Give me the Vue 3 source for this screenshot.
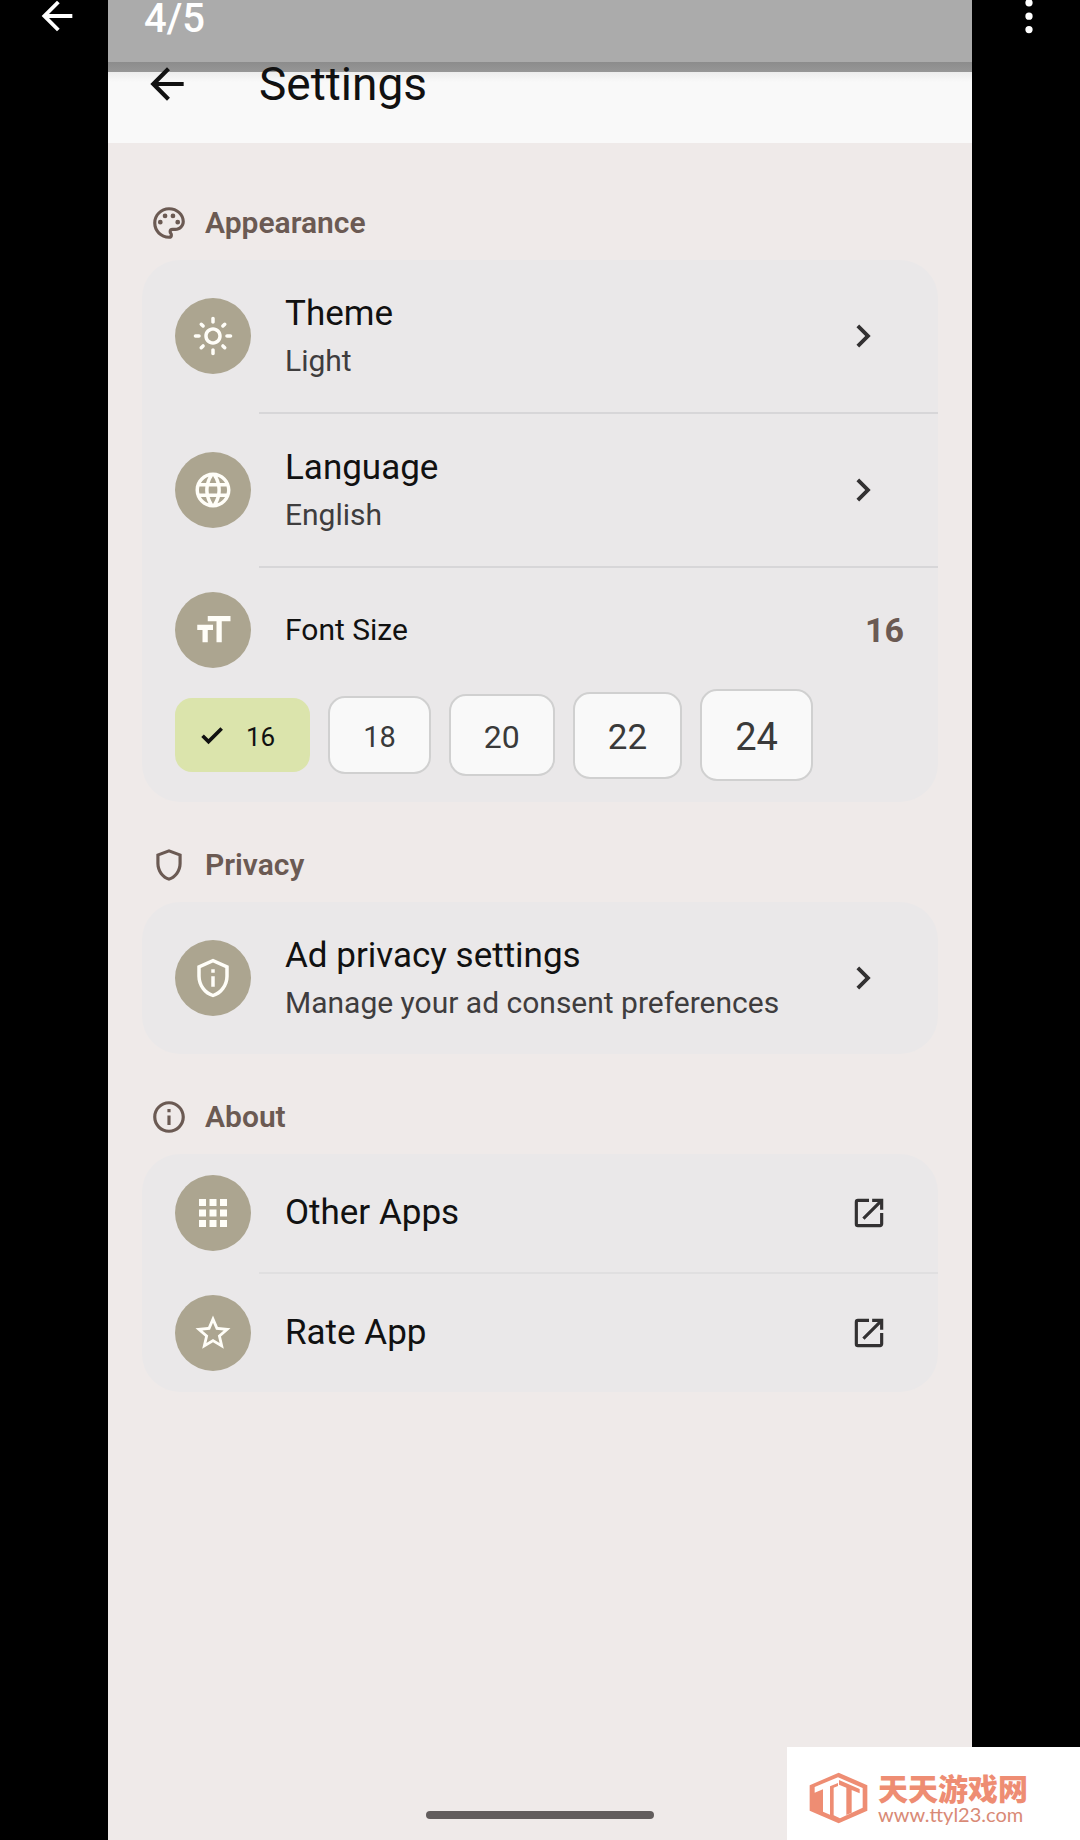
<template>
  <div class="viewer">
    <div class="gutter">
      <button class="icon-btn" aria-label="Back">
        <svg viewBox="0 0 24 24" class="i46"><path :d="icons.back" /></svg>
      </button>
    </div>

    <main class="phone">
      <div class="counter">4/5</div>
      <header class="appbar">
        <button class="icon-btn" aria-label="Navigate up">
          <svg viewBox="0 0 24 24" class="i50"><path :d="icons.back" /></svg>
        </button>
        <h1>Settings</h1>
      </header>

      <div class="content">
        <section>
          <h2><svg viewBox="0 0 24 24" class="i38"><path :d="icons.palette" /></svg>Appearance</h2>
          <div class="card">
            <template v-for="row in appearance" :key="row.title">
              <button class="row tall">
                <span class="badge"><svg viewBox="0 0 24 24" class="i42"><path :d="icons[row.icon]" /></svg></span>
                <span class="text">
                  <span class="title">{{ row.title }}</span>
                  <span class="sub">{{ row.sub }}</span>
                </span>
                <svg viewBox="0 0 24 24" class="i46 trail"><path :d="icons.chevron" /></svg>
              </button>
              <hr />
            </template>
            <div class="font-row">
              <span class="badge"><svg viewBox="0 0 24 24" class="i42"><path :d="icons.size" /></svg></span>
              <span class="label">Font Size</span>
              <span class="value">{{ fontSize }}</span>
            </div>
            <div class="chips">
              <button
                v-for="n in sizes"
                :key="n"
                class="chip"
                :class="['s' + n, { active: n === fontSize }]"
                :aria-pressed="n === fontSize"
                @click="fontSize = n"
              >
                <svg v-if="n === fontSize" viewBox="0 0 24 24" class="i28"><path :d="icons.check" /></svg>
                {{ n }}
              </button>
            </div>
          </div>
        </section>

        <section>
          <h2><svg viewBox="0 0 24 24" class="i38"><path :d="icons.shield" /></svg>Privacy</h2>
          <div class="card">
            <button class="row tall">
              <span class="badge"><svg viewBox="0 0 24 24" class="i42"><path :d="icons.privacy" /></svg></span>
              <span class="text">
                <span class="title">Ad privacy settings</span>
                <span class="sub">Manage your ad consent preferences</span>
              </span>
              <svg viewBox="0 0 24 24" class="i46 trail"><path :d="icons.chevron" /></svg>
            </button>
          </div>
        </section>

        <section>
          <h2><svg viewBox="0 0 24 24" class="i38"><path :d="icons.info" /></svg>About</h2>
          <div class="card">
            <template v-for="row in about" :key="row.title">
              <a href="#" class="row">
                <span class="badge"><svg viewBox="0 0 24 24" class="i42"><path :d="icons[row.icon]" /></svg></span>
                <span class="text"><span class="title">{{ row.title }}</span></span>
                <svg viewBox="0 0 24 24" class="i38 trail"><path :d="icons.open" /></svg>
              </a>
              <hr class="faint" />
            </template>
          </div>
        </section>
      </div>

      <div class="home-bar"></div>
    </main>

    <div class="gutter">
      <button class="icon-btn" aria-label="More options">
        <svg viewBox="0 0 24 24" class="i46"><path :d="icons.more" /></svg>
      </button>
    </div>

    <a href="#" class="brand">
      <svg viewBox="116 158 177 156" class="logo">
        <path fill="#ee8d73" d="M205 160l86 38v76l-86 38-87-38v-76z" />
        <path fill="#fff" d="M133 203l70-29v17l-24 10v85l-21-9v-67l-25 10z" />
        <path fill="#fff" d="M190 205l13-5v-26l74 32v59l-68 32-19-9z" />
        <path fill="#ee8d73" d="M206 182l62 27v13l-24-10v68l-16 7v-82l-22-9z" />
      </svg>
      <span class="brand-text">
        <span class="brand-name">天天游戏网</span>
        <span class="brand-url">www.ttyl23.com</span>
      </span>
    </a>
  </div>
</template>

<script setup>
import { ref } from 'vue'

const sizes = [16, 18, 20, 22, 24]
const fontSize = ref(16)

const appearance = [
  { title: 'Theme', sub: 'Light', icon: 'sun' },
  { title: 'Language', sub: 'English', icon: 'globe' },
]

const about = [
  { title: 'Other Apps', icon: 'apps' },
  { title: 'Rate App', icon: 'star' },
]

const icons = {
  back: 'M20 11H7.83l5.59-5.59L12 4l-8 8 8 8 1.41-1.41L7.83 13H20v-2z',
  more: 'M12 3.2a1.9 1.9 0 1 0 0 3.8 1.9 1.9 0 0 0 0-3.8zm0 7a1.9 1.9 0 1 0 0 3.8 1.9 1.9 0 0 0 0-3.8zm0 7a1.9 1.9 0 1 0 0 3.8 1.9 1.9 0 0 0 0-3.8z',
  palette: 'M12 22C6.49 22 2 17.51 2 12S6.49 2 12 2s10 4.04 10 9c0 3.31-2.69 6-6 6h-1.77c-.28 0-.5.22-.5.5 0 .12.05.23.13.33.41.47.64 1.06.64 1.67A2.5 2.5 0 0 1 12 22zm0-18c-4.41 0-8 3.59-8 8s3.59 8 8 8c.28 0 .5-.22.5-.5a.54.54 0 0 0-.14-.35c-.41-.46-.63-1.05-.63-1.65a2.5 2.5 0 0 1 2.5-2.5H16c2.21 0 4-1.79 4-4 0-3.86-3.59-7-8-7zM6.5 10a1.5 1.5 0 1 0 0 3 1.5 1.5 0 0 0 0-3zm3-4a1.5 1.5 0 1 0 0 3 1.5 1.5 0 0 0 0-3zm5 0a1.5 1.5 0 1 0 0 3 1.5 1.5 0 0 0 0-3zm3 4a1.5 1.5 0 1 0 0 3 1.5 1.5 0 0 0 0-3z',
  sun: 'M12 9c1.65 0 3 1.35 3 3s-1.35 3-3 3-3-1.35-3-3 1.35-3 3-3m0-2c-2.76 0-5 2.24-5 5s2.24 5 5 5 5-2.24 5-5-2.24-5-5-5zM2 13h2c.55 0 1-.45 1-1s-.45-1-1-1H2c-.55 0-1 .45-1 1s.45 1 1 1zm18 0h2c.55 0 1-.45 1-1s-.45-1-1-1h-2c-.55 0-1 .45-1 1s.45 1 1 1zM11 2v2c0 .55.45 1 1 1s1-.45 1-1V2c0-.55-.45-1-1-1s-1 .45-1 1zm0 18v2c0 .55.45 1 1 1s1-.45 1-1v-2c0-.55-.45-1-1-1s-1 .45-1 1zM5.99 4.58a.996.996 0 0 0-1.41 0 .996.996 0 0 0 0 1.41l1.06 1.06c.39.39 1.03.39 1.41 0s.39-1.03 0-1.41L5.99 4.58zm12.37 12.37a.996.996 0 0 0-1.41 0 .996.996 0 0 0 0 1.41l1.06 1.06c.39.39 1.03.39 1.41 0a.996.996 0 0 0 0-1.41l-1.06-1.06zm1.06-10.96a.996.996 0 0 0 0-1.41.996.996 0 0 0-1.41 0l-1.06 1.06c-.39.39-.39 1.03 0 1.41s1.03.39 1.41 0l1.06-1.06zM7.05 18.36a.996.996 0 0 0 0-1.41.996.996 0 0 0-1.41 0l-1.06 1.06c-.39.39-.39 1.03 0 1.41s1.03.39 1.41 0l1.06-1.06z',
  globe: 'M11.99 2C6.47 2 2 6.48 2 12s4.47 10 9.99 10C17.52 22 22 17.52 22 12S17.52 2 11.99 2zm6.93 6h-2.95a15.65 15.65 0 0 0-1.38-3.56A8.03 8.03 0 0 1 18.92 8zM12 4.04c.83 1.2 1.48 2.53 1.91 3.96h-3.82c.43-1.43 1.08-2.76 1.91-3.96zM4.26 14C4.1 13.36 4 12.69 4 12s.1-1.36.26-2h3.38c-.08.66-.14 1.32-.14 2s.06 1.34.14 2H4.26zm.82 2h2.95c.32 1.25.78 2.45 1.38 3.56A7.987 7.987 0 0 1 5.08 16zm2.95-8H5.08a7.987 7.987 0 0 1 4.33-3.56A15.65 15.65 0 0 0 8.03 8zM12 19.96c-.83-1.2-1.48-2.53-1.91-3.96h3.82c-.43 1.43-1.08 2.76-1.91 3.96zM14.34 14H9.66c-.09-.66-.16-1.32-.16-2s.07-1.35.16-2h4.68c.09.65.16 1.32.16 2s-.07 1.34-.16 2zm.25 5.56c.6-1.11 1.06-2.31 1.38-3.56h2.95a8.03 8.03 0 0 1-4.33 3.56zM16.36 14c.08-.66.14-1.32.14-2s-.06-1.34-.14-2h3.38c.16.64.26 1.31.26 2s-.1 1.36-.26 2h-3.38z',
  size: 'M9 4v3h5v12h3V7h5V4H9zm-6 8h3v7h3v-7h3V9H3v3z',
  shield: 'M12 2L4 5v6.09c0 5.05 3.41 9.76 8 10.91 4.59-1.15 8-5.86 8-10.91V5l-8-3zm6 9.09c0 4-2.55 7.7-6 8.83-3.45-1.13-6-4.82-6-8.83v-4.7l6-2.25 6 2.25v4.7z',
  privacy: 'M12 1L3 5v6c0 5.55 3.84 10.74 9 12 5.16-1.26 9-6.45 9-12V5l-9-4zm7 10c0 4.52-2.98 8.69-7 9.93-4.02-1.24-7-5.41-7-9.93V6.3l7-3.11 7 3.11V11zm-8 0h2v6h-2zm0-4h2v2h-2z',
  info: 'M11 7h2v2h-2zm0 4h2v6h-2zm1-9C6.48 2 2 6.48 2 12s4.48 10 10 10 10-4.48 10-10S17.52 2 12 2zm0 18c-4.41 0-8-3.59-8-8s3.59-8 8-8 8 3.59 8 8-3.59 8-8 8z',
  apps: 'M4 8h4V4H4v4zm6 12h4v-4h-4v4zm-6 0h4v-4H4v4zm0-6h4v-4H4v4zm6 0h4v-4h-4v4zm6-10v4h4V4h-4zm-6 4h4V4h-4v4zm6 6h4v-4h-4v4zm0 6h4v-4h-4v4z',
  star: 'M22 9.24l-7.19-.62L12 2 9.19 8.63 2 9.24l5.46 4.73L5.82 21 12 17.27 18.18 21l-1.63-7.03L22 9.24zM12 15.4l-3.76 2.27 1-4.28-3.32-2.88 4.38-.38L12 6.1l1.71 4.04 4.38.38-3.32 2.88 1 4.28L12 15.4z',
  chevron: 'M10 6L8.59 7.41 13.17 12l-4.58 4.59L10 18l6-6z',
  open: 'M19 19H5V5h7V3H5a2 2 0 0 0-2 2v14a2 2 0 0 0 2 2h14c1.1 0 2-.9 2-2v-7h-2v7zM14 3v2h3.59l-9.83 9.83 1.41 1.41L19 6.41V10h2V3h-7z',
  check: 'M9 13.8L5 9.8 2.8 12 9 18.2 21.4 5.8l-2.2-2.2z',
}
</script>

<style>
body {
  margin: 0;
  background: #000;
}
</style>

<style scoped>
.viewer {
  display: grid;
  grid-template-columns: 1fr 8fr 1fr;
  min-height: 100vh;
  background: #000;
  font-family: Roboto, "Liberation Sans", sans-serif;
  color: #111;
}

svg {
  display: block;
  flex-shrink: 0;
  fill: currentColor;
}

.i28 { width: 28px; height: 28px; }
.i38 { width: 38px; height: 38px; }
.i42 { width: 42px; height: 42px; }
.i46 { width: 46px; height: 46px; }
.i50 { width: 50px; height: 50px; }

button {
  font-family: inherit;
  border: none;
  background: none;
  padding: 0;
  color: inherit;
  cursor: pointer;
}

a {
  color: inherit;
  text-decoration: none;
}

.gutter {
  display: flex;
  align-items: flex-start;
  padding-left: 34px;
  color: #fff;
}

.gutter .icon-btn { margin-top: -7px; }

.phone {
  display: flex;
  flex-direction: column;
  background: #efeae9;
}

.counter {
  height: 62px;
  padding-left: 36px;
  background: #ababab;
  color: #fff;
  font-size: 40px;
  font-weight: 500;
  line-height: 38px;
  box-sizing: border-box;
}

.appbar {
  display: flex;
  align-items: center;
  gap: 67px;
  height: 44px;
  padding: 0 34px 37px;
  background: linear-gradient(#8c8c8c, #969696 10px, #ececec 10px, #f9f9f9 20px);
}

h1 {
  margin: 0;
  font-size: 46px;
  font-weight: 400;
  line-height: 44px;
}

.content {
  display: flex;
  flex-direction: column;
  gap: 44px;
  flex: 1;
  padding: 61px 34px 40px;
}

h2 {
  display: flex;
  align-items: center;
  gap: 17px;
  margin: 0 0 18px;
  padding-left: 8px;
  color: #6b5a53;
  font-size: 30px;
  font-weight: 600;
  line-height: 38px;
}

.card {
  background: #eae8e9;
  border-radius: 38px;
  overflow: hidden;
}

.row {
  display: flex;
  align-items: center;
  gap: 34px;
  width: 100%;
  height: 118px;
  padding: 0 50px 0 33px;
  box-sizing: border-box;
  text-align: left;
}

.row.tall {
  height: 152px;
  padding-right: 52px;
}

hr {
  height: 2px;
  margin: 0 0 0 117px;
  border: none;
  background: #d7d6d8;
}

hr.faint { background: #e0dfe0; }

hr:last-child { display: none; }

.badge {
  display: flex;
  align-items: center;
  justify-content: center;
  flex-shrink: 0;
  width: 76px;
  height: 76px;
  border-radius: 50%;
  background: #aca590;
  color: #fffef8;
}

.text {
  display: flex;
  flex-direction: column;
  flex: 1;
}

.tall .text { padding-top: 2px; }

.title {
  font-size: 35px;
  line-height: 48px;
}

.sub {
  color: #3f3d3e;
  font-size: 30px;
  line-height: 46px;
}

.trail { color: #333132; }

.font-row {
  display: flex;
  align-items: center;
  gap: 34px;
  padding: 24px 34px 0 33px;
}

.label {
  flex: 1;
  font-size: 30px;
  line-height: 38px;
}

.value {
  color: #6b5a53;
  font-size: 34px;
  font-weight: 700;
  line-height: 38px;
}

.chips {
  display: flex;
  flex-wrap: wrap;
  align-items: center;
  gap: 18px;
  padding: 21px 33px;
}

.chip {
  display: flex;
  align-items: center;
  gap: 20px;
  padding: 22px 33px 18px;
  border: 2px solid #d0d0d0;
  border-radius: 17px;
  background: #f9f9f9;
  color: #3a3a3a;
}

.chip.active {
  padding-left: 21px;
  border-color: #dbe4ac;
  background: #dbe4ac;
  color: #111;
}

.s16 { font-size: 26px; line-height: 30px; }
.s18 { font-size: 29px; line-height: 34px; }
.s20 { font-size: 32px; line-height: 38px; }
.s22 { font-size: 35px; line-height: 43px; }
.s24 { font-size: 38px; line-height: 48px; }

.home-bar {
  align-self: center;
  width: 228px;
  height: 8px;
  margin-bottom: 21px;
  border-radius: 4px;
  background: #625d5d;
}

/* site mark over the bottom right corner */
.brand {
  position: fixed;
  right: 0;
  bottom: 0;
  display: flex;
  align-items: center;
  gap: 10px;
  padding: 24px 52px 15px 22px;
  background: #fff;
}

.logo { width: 59px; height: 52px; }

.brand-text {
  display: flex;
  flex-direction: column;
}

.brand-name {
  color: #ee8d73;
  font-family: "Noto Sans CJK SC", sans-serif;
  font-size: 30px;
  font-weight: 900;
  line-height: 32px;
}

.brand-url {
  color: #d98a76;
  font-family: Lato, sans-serif;
  font-size: 20px;
  line-height: 22px;
}
</style>
